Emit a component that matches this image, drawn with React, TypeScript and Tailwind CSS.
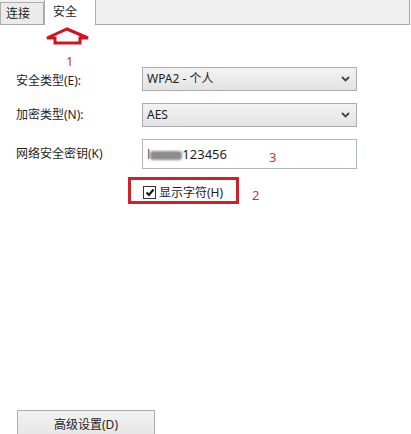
import * as React from "react";

const font = "font-['Noto_Sans','Noto_Sans_CJK_SC',sans-serif]";

function Chevron() {
  return (
    <svg width="9" height="6" viewBox="0 0 9 6" className="shrink-0">
      <path d="M1 1 L4.5 4.5 L8 1" fill="none" stroke="#444" strokeWidth="1.8" />
    </svg>
  );
}

function Select({ value }: { value: string }) {
  return (
    <div className="flex h-[24px] w-[215px] items-center justify-between border border-[#acacac] bg-gradient-to-b from-[#f3f3f3] to-[#e3e3e3] pl-[4px] pr-[6px]">
      <span className="text-[12px] leading-none text-[#1e1e1e]">{value}</span>
      <Chevron />
    </div>
  );
}

export default function App() {
  return (
    <div className={`relative h-[434px] w-[411px] overflow-hidden bg-white ${font}`}>
      {/* Tab strip */}
      <div className="flex h-[25px] w-[410px] items-end border-r border-b border-[#a8a8a8] bg-[#f0f0f0]">
        <div className="flex h-[22px] w-[44px] items-center border border-b-0 border-[#adadad] bg-[#ebebeb] pl-[5px] text-[12px] text-[#1e1e1e]">
          连接
        </div>
        <div className="-mb-px flex h-[26px] w-[52px] items-start border border-b-0 border-[#adadad] bg-white pl-[8px] pt-[3px] text-[12px] text-[#1e1e1e]">
          安全
        </div>
      </div>

      {/* Form */}
      <div className="flex flex-col pl-[16px] pt-[42px] text-[12px] text-[#1e1e1e]">
        <div className="flex items-center">
          <span className="mt-[4px] w-[126px]">安全类型(E):</span>
          <Select value="WPA2 - 个人" />
        </div>
        <div className="mt-[12px] flex items-center">
          <span className="w-[126px]">加密类型(N):</span>
          <Select value="AES" />
        </div>
        <div className="mt-[12px] flex items-center">
          <span className="w-[126px]">网络安全密钥(K)</span>
          <div className="flex h-[30px] w-[215px] items-center border border-[#abb8c0] bg-white pl-[4px]">
            <span className="relative text-[13px] leading-none">
              <span className="text-[#555]">l</span>
              <span className="inline-block h-[9px] w-[32px] rounded-[3px] bg-[#8c8c8c] align-middle blur-[1px]" />
              <span>123456</span>
            </span>
          </div>
        </div>
        <div className="mt-[17px] ml-[127px] flex items-center gap-[3px]">
          <div className="flex h-[13px] w-[13px] items-center justify-center border border-[#333] bg-white">
            <svg width="10" height="9" viewBox="0 0 10 9">
              <path d="M1.5 4.5 L4 7 L8.5 1.5" fill="none" stroke="#111" strokeWidth="2" />
            </svg>
          </div>
          <span className="leading-none">显示字符(H)</span>
        </div>
      </div>

      {/* Advanced button */}
      <div className="absolute left-[17px] top-[410px] flex h-[30px] w-[138px] items-start justify-center border border-[#adadad] bg-gradient-to-b from-[#f2f2f2] to-[#e4e4e4] pt-[5px] text-[12px] text-[#1e1e1e]">
        高级设置(D)
      </div>

      {/* Annotations */}
      <svg className="absolute left-[44px] top-[27px]" width="48" height="18" viewBox="0 0 48 18">
        <polygon
          points="23,2 44,11 36,11 36,16 11,16 11,11 3,11"
          fill="none"
          stroke="#d4121e"
          strokeWidth="3"
          strokeLinejoin="miter"
        />
      </svg>
      <span className="absolute left-[66px] top-[52px] text-[13px] text-[#c0392b]">1</span>
      <span className="absolute left-[269px] top-[148px] text-[13px] text-[#c0392b]">3</span>
      <span className="absolute left-[252px] top-[186px] text-[13px] text-[#c0392b]">2</span>
      <div className="absolute left-[128px] top-[177px] h-[27px] w-[111px] border-[3px] border-[#d0202a]" />
    </div>
  );
}
